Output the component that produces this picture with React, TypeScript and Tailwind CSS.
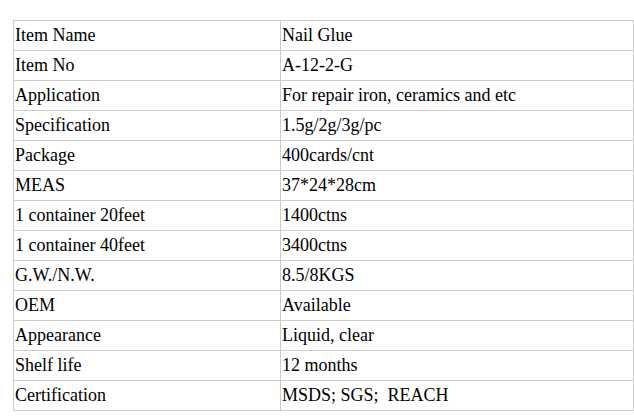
import React from 'react';

const rows: [string, string][] = [
  ['Item Name', 'Nail Glue'],
  ['Item No', 'A-12-2-G'],
  ['Application', 'For repair iron, ceramics and etc'],
  ['Specification', '1.5g/2g/3g/pc'],
  ['Package', '400cards/cnt'],
  ['MEAS', '37*24*28cm'],
  ['1 container 20feet', '1400ctns'],
  ['1 container 40feet', '3400ctns'],
  ['G.W./N.W.', '8.5/8KGS'],
  ['OEM', 'Available'],
  ['Appearance', 'Liquid, clear'],
  ['Shelf life', '12 months'],
  ['Certification', 'MSDS; SGS;\u00a0 REACH'],
];

const cell =
  "font-['Liberation_Serif','Times_New_Roman',serif] text-[18px] text-black border border-[#cccccc] px-[1px] py-0 align-middle leading-[29px]";

export default function App() {
  return (
    <div className="bg-white w-[634px] h-[420px] pt-[20px] pl-[13px] overflow-hidden">
      <table className="w-[621px] border-collapse">
        <tbody>
          {rows.map(([label, value]) => (
            <tr key={label} className="h-[30px]">
              <td className={`w-[267px] ${cell}`}>{label}</td>
              <td className={cell}>{value}</td>
            </tr>
          ))}
        </tbody>
      </table>
    </div>
  );
}
